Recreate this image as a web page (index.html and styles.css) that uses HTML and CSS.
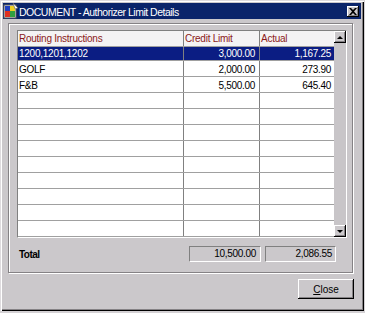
FILE: index.html
```html
<!DOCTYPE html>
<html>
<head>
<meta charset="utf-8">
<link rel="stylesheet" href="styles.css">
</head>
<body>
<div class="window">
  <div class="titlebar">
    <svg class="appicon" width="16" height="16" viewBox="0 0 16 16">
      <rect x="1" y="2" width="12" height="13" fill="#e8e8e8" stroke="#5a5a5a" stroke-width="1"/>
      <rect x="2" y="3" width="5" height="5" fill="#2040c0"/>
      <rect x="7" y="3" width="5" height="5" fill="#f0d020"/>
      <rect x="2" y="8" width="5" height="6" fill="#e03020"/>
      <rect x="7" y="8" width="5" height="6" fill="#30a040"/>
      <path d="M10 0 L15 5 L12 6 Z" fill="#f4f4f4" stroke="#606060" stroke-width="0.6"/>
    </svg>
    <span class="title">DOCUMENT - Authorizer Limit Details</span>
    <span class="closebtn">
      <svg width="8" height="7" viewBox="0 0 8 7"><path d="M0 0 L2 0 L4 2 L6 0 L8 0 L5 3.5 L8 7 L6 7 L4 5 L2 7 L0 7 L3 3.5 Z" fill="#000"/></svg>
    </span>
  </div>
  <div class="content">
    <div class="group">
      <div class="table">
        <div class="grid">
          <div class="row head">
            <div class="c c1">Routing Instructions</div>
            <div class="c c2">Credit Limit</div>
            <div class="c c3">Actual</div>
          </div>
          <div class="row sel">
            <div class="c c1">1200,1201,1202</div>
            <div class="c c2 num">3,000.00</div>
            <div class="c c3 num">1,167.25</div>
          </div>
          <div class="row">
            <div class="c c1">GOLF</div>
            <div class="c c2 num">2,000.00</div>
            <div class="c c3 num">273.90</div>
          </div>
          <div class="row">
            <div class="c c1">F&amp;B</div>
            <div class="c c2 num">5,500.00</div>
            <div class="c c3 num">645.40</div>
          </div>
          <div class="row"><div class="c c1"></div><div class="c c2"></div><div class="c c3"></div></div>
          <div class="row"><div class="c c1"></div><div class="c c2"></div><div class="c c3"></div></div>
          <div class="row"><div class="c c1"></div><div class="c c2"></div><div class="c c3"></div></div>
          <div class="row"><div class="c c1"></div><div class="c c2"></div><div class="c c3"></div></div>
          <div class="row"><div class="c c1"></div><div class="c c2"></div><div class="c c3"></div></div>
          <div class="row"><div class="c c1"></div><div class="c c2"></div><div class="c c3"></div></div>
          <div class="row"><div class="c c1"></div><div class="c c2"></div><div class="c c3"></div></div>
          <div class="row"><div class="c c1"></div><div class="c c2"></div><div class="c c3"></div></div>
          <div class="row"><div class="c c1"></div><div class="c c2"></div><div class="c c3"></div></div>
        </div>
        <div class="vscroll">
          <div class="sbtn"><span class="tri up"></span></div>
          <div class="track"></div>
          <div class="sbtn"><span class="tri down"></span></div>
        </div>
      </div>
      <div class="totals">
        <span class="tlabel">Total</span>
        <div class="tbox b1">10,500.00</div>
        <div class="tbox b2">2,086.55</div>
      </div>
    </div>
    <div class="actions">
      <div class="btn"><span class="ul">C</span>lose</div>
    </div>
  </div>
</div>
</body>
</html>
```

FILE: styles.css
```css
* { box-sizing: border-box; }
html, body { margin: 0; padding: 0; }
body {
  width: 365px;
  height: 313px;
  overflow: hidden;
  background: #d4d1d4;
  font-family: "Liberation Sans", Arial, sans-serif;
  font-size: 10px;
  letter-spacing: -0.25px;
  color: #000;
}
.window {
  width: 364px;
  height: 311px;
  background: #cbc8cb;
  padding: 3px;
  display: flex;
  flex-direction: column;
  box-shadow: inset 1px 1px 0 #dedbde, inset 2px 2px 0 #fff, inset -1px -1px 0 #000, inset -2px -2px 0 #858285;
}
.titlebar {
  height: 16px;
  background: #0a246a;
  display: flex;
  align-items: center;
  color: #fff;
}
.appicon { flex: none; }
.title { margin-left: 0; white-space: nowrap; font-size: 10.5px; letter-spacing: -0.5px; padding-top: 1px; }
.closebtn {
  margin-left: auto;
  margin-right: 2px;
  width: 12px;
  height: 11px;
  background: #cbc8cb;
  display: flex;
  align-items: center;
  justify-content: center;
  box-shadow: inset -1px -1px 0 #000, inset 1px 1px 0 #fff, inset -2px -2px 0 #858285;
}
.content {
  padding: 4px 0 0 5px;
  display: flex;
  flex-direction: column;
}
.group {
  width: 345px;
  height: 250px;
  border: 1px solid #858285;
  box-shadow: inset 1px 1px 0 #fff, 1px 1px 0 #fff;
  padding: 6px 0 0 8px;
}
.table {
  width: 330px;
  height: 208px;
  display: flex;
  border-top: 1px solid #808080;
  border-left: 1px solid #808080;
  border-right: 1px solid #fff;
  border-bottom: 1px solid #fff;
}
.grid {
  width: 316px;
  background: #fff;
  display: flex;
  flex-direction: column;
}
.row {
  display: flex;
  height: 16px;
  flex: none;
  border-bottom: 1px solid #a0a0a0;
  line-height: 15px;
}
.c { height: 100%; overflow: hidden; white-space: nowrap; padding-left: 1px; padding-top: 1px; }
.c1 { width: 166px; border-right: 1px solid #808080; }
.c2 { width: 76px; border-right: 1px solid #808080; }
.c3 { width: 74px; }
.num { text-align: right; letter-spacing: -0.3px; }
.c2.num { padding-right: 4px; }
.c3.num { padding-right: 3px; }
.head { background: #f4f3f4; color: #8b1a1a; }
.head .c { padding-top: 0; }
.sel { height: 14px; background: #0b1d83; color: #fff; line-height: 13px; }
.sel .c { padding-top: 0; }
.vscroll {
  width: 12px;
  display: flex;
  flex-direction: column;
  background: #c8c5c8;
}
.sbtn {
  width: 12px;
  height: 12px;
  flex: none;
  background: #cbc8cb;
  display: flex;
  align-items: center;
  justify-content: center;
  box-shadow: inset -1px -1px 0 #000, inset 1px 1px 0 #fff, inset -2px -2px 0 #858285;
}
.track { flex: 1; }
.tri { width: 0; height: 0; border-left: 3px solid transparent; border-right: 3px solid transparent; }
.tri.up { border-bottom: 3px solid #000; }
.tri.down { border-top: 3px solid #000; }
.totals {
  margin-top: 8px;
  display: flex;
  align-items: center;
}
.tlabel {
  width: 170px;
  margin-left: 2px;
  font-weight: bold;
  letter-spacing: -0.5px;
  padding-top: 1px;
}
.tbox {
  height: 16px;
  border-top: 1px solid #808080;
  border-left: 1px solid #808080;
  border-right: 1px solid #fff;
  border-bottom: 1px solid #fff;
  text-align: right;
  line-height: 14px;
  letter-spacing: -0.3px;
}
.b1 { width: 72px; padding-right: 4px; }
.b2 { width: 71px; margin-left: 4px; padding-right: 3px; }
.actions {
  display: flex;
  justify-content: flex-end;
  padding-right: 7px;
  margin-top: 6px;
}
.btn {
  width: 56px;
  height: 20px;
  display: flex;
  align-items: center;
  justify-content: center;
  letter-spacing: 0;
  box-shadow: inset -1px -1px 0 #000, inset 1px 1px 0 #fff, inset -2px -2px 0 #858285;
}
.ul { text-decoration: underline; }
```
